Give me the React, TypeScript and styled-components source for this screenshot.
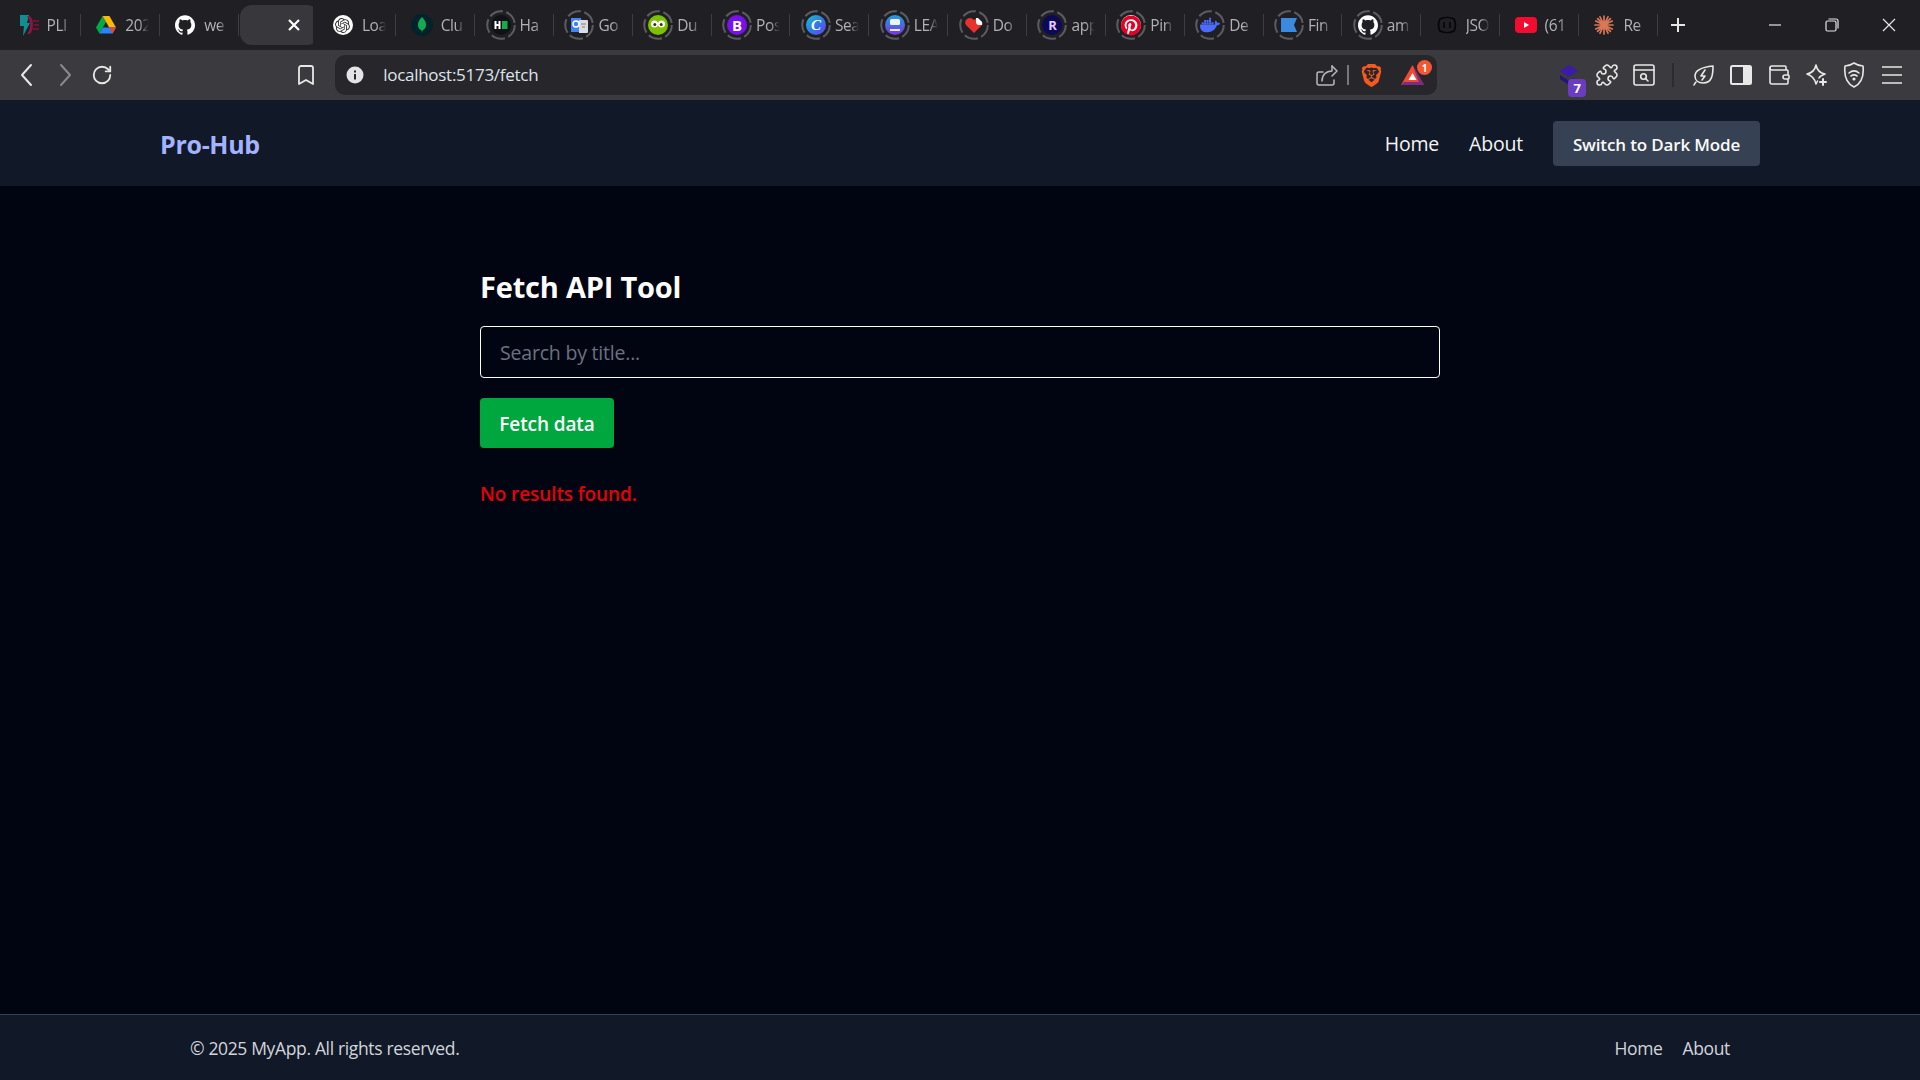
import React from 'react';
import styled, { createGlobalStyle } from 'styled-components';
import { SiGithub, SiOpenai, SiPinterest, SiDocker, SiBrave } from 'react-icons/si';
import { Bookmark, Puzzle, RotateCw, Wallet } from 'lucide-react';

const GlobalStyle = createGlobalStyle`
  html, body {
    margin: 0;
    padding: 0;
    background: #010511;
  }
  * {
    box-sizing: border-box;
  }
`;

const FONT = `'Open Sans', 'Noto Sans', 'Liberation Sans', sans-serif`;

const Page = styled.div`
  width: 1920px;
  height: 1080px;
  display: flex;
  flex-direction: column;
  overflow: hidden;
  font-family: ${FONT};
  background: #010511;
`;

/* browser chrome */
const TabStrip = styled.div`
  height: 50px;
  display: flex;
  align-items: center;
  padding-left: 2px;
  background: #1f1f24;
  flex-shrink: 0;
`;

const Tab = styled.div`
  width: 78.85px;
  height: 40px;
  flex-shrink: 0;
  display: flex;
  align-items: center;
  padding-left: 13.5px;
  position: relative;

  &::after {
    content: '';
    position: absolute;
    right: 0;
    top: 9px;
    height: 22px;
    width: 1px;
    background: #3d3d42;
  }
`;

const ActiveTab = styled.div`
  width: 78.85px;
  height: 40px;
  flex-shrink: 0;
  display: flex;
  align-items: center;
  justify-content: flex-end;
  padding-right: 18px;
  margin-left: 1.5px;
  margin-right: -1.5px;
  background: linear-gradient(to right, #37373c 73px, transparent 73px);
  border-radius: 12px;
  color: #fff;
`;

const FaviconSlot = styled.div`
  width: 24px;
  height: 24px;
  flex-shrink: 0;
  position: relative;
  display: flex;
  align-items: center;
  justify-content: center;
`;

const Ring = styled.svg`
  position: absolute;
  inset: -3px;
  width: 30px;
  height: 30px;
`;

const TabTitle = styled.span`
  width: 24px;
  margin-left: 7px;
  overflow: hidden;
  white-space: nowrap;
  font-size: 15.5px;
  letter-spacing: -0.4px;
  color: #b2b2b5;
  mask-image: linear-gradient(to right, #000 60%, transparent 100%);
`;

const NewTab = styled.div`
  width: 41px;
  display: flex;
  justify-content: center;
  color: #e6e6e6;
`;

const WindowControls = styled.div`
  margin-left: auto;
  padding-right: 3px;
  display: flex;
  color: #e6e6e6;
`;

const WindowButton = styled.div`
  width: 57px;
  height: 40px;
  display: flex;
  align-items: center;
  justify-content: center;
`;

const Toolbar = styled.div`
  height: 50px;
  flex-shrink: 0;
  display: flex;
  align-items: center;
  padding: 0 9px 0 8px;
  background: #3a3a3f;
  color: #e8e8e8;
`;

const ToolButton = styled.div<{ $dim?: boolean }>`
  width: 37.8px;
  height: 40px;
  flex-shrink: 0;
  display: flex;
  align-items: center;
  justify-content: center;
  position: relative;
  color: ${(p) => (p.$dim ? '#8a8a8e' : '#e8e8e8')};
`;

const BookmarkButton = styled(ToolButton)`
  margin-left: 166px;
`;

const ExtensionButton = styled(ToolButton)`
  margin-right: -1.5px;
`;

const UrlBar = styled.div`
  width: 1102px;
  height: 40px;
  margin-left: 10px;
  display: flex;
  align-items: center;
  padding: 0 0 0 11px;
  background: #27272b;
  border-radius: 10px;
`;

const UrlText = styled.span`
  margin-left: 19px;
  margin-top: -2px;
  font-size: 17px;
  letter-spacing: -0.28px;
  color: #dfe3ea;
`;

const UrlActions = styled.div`
  margin-left: auto;
  display: flex;
  align-items: center;
`;

const UrlDivider = styled.div`
  width: 2px;
  height: 20px;
  margin: 0 8px 0 3px;
  background: #77777b;
`;

const UrlAction = styled.div<{ $w: number }>`
  width: ${(p) => p.$w}px;
  height: 40px;
  display: flex;
  align-items: center;
  justify-content: center;
  position: relative;
`;

const Badge = styled.span<{ $color: string; $square?: boolean }>`
  position: absolute;
  min-width: 15px;
  height: 15px;
  display: flex;
  align-items: center;
  justify-content: center;
  font-size: 10px;
  font-weight: 700;
  color: #fff;
  background: ${(p) => p.$color};
  border-radius: ${(p) => (p.$square ? '4px' : '50%')};
`;

const NotifBadge = styled(Badge)`
  top: 5px;
  right: 5px;
`;

const ExtBadge = styled(Badge)`
  top: 24px;
  right: 3px;
  min-width: 18px;
  height: 18px;
  font-size: 13px;
`;

const ToolSpacer = styled.div`
  margin-left: auto;
`;

const ToolDivider = styled.div`
  width: 2px;
  height: 24px;
  margin: 0 10px 0 9px;
  background: #2c2c30;
  flex-shrink: 0;
`;

/* app */
const Header = styled.header`
  height: 86px;
  flex-shrink: 0;
  display: flex;
  align-items: center;
  justify-content: space-between;
  padding: 0 160px;
  background: #111827;
`;

const Logo = styled.div`
  margin-top: 2px;
  font-size: 25px;
  font-weight: 700;
  letter-spacing: -0.3px;
  color: #a3b3ff;
`;

const Nav = styled.nav`
  display: flex;
  align-items: center;
`;

const NavLink = styled.a`
  margin-right: 30px;
  font-size: 19.5px;
  letter-spacing: -0.2px;
  color: #f3f4f6;
`;

const ThemeButton = styled.button`
  width: 207px;
  height: 45px;
  border: 0;
  border-radius: 4px;
  padding: 2px 0 0;
  background: #364153;
  color: #f9fafb;
  font-family: ${FONT};
  font-size: 17px;
  font-weight: 600;
  letter-spacing: -0.15px;
`;

const Main = styled.main`
  flex: 1;
  width: 960px;
  margin: 0 auto;
  padding-top: 83px;
  display: flex;
  flex-direction: column;
  align-items: flex-start;
`;

const Title = styled.h1`
  margin: 0 0 21px;
  font-size: 29px;
  line-height: 36px;
  font-weight: 700;
  letter-spacing: -0.2px;
  color: #fff;
`;

const SearchInput = styled.input`
  width: 100%;
  height: 52px;
  padding: 0 19px;
  background: transparent;
  border: 1px solid #fff;
  border-radius: 4px;
  outline: none;
  color: #fff;
  font-family: ${FONT};
  font-size: 19.5px;
  letter-spacing: -0.2px;

  &::placeholder {
    color: #6a7282;
    opacity: 1;
  }
`;

const FetchButton = styled.button`
  width: 134px;
  height: 50px;
  margin-top: 20px;
  padding: 2px 0 0;
  border: 0;
  border-radius: 4px;
  background: #00a63e;
  color: #fff;
  font-family: ${FONT};
  font-size: 19px;
  font-weight: 600;
  letter-spacing: -0.1px;
`;

const ErrorText = styled.p`
  margin: 32px 0 0;
  font-size: 19px;
  line-height: 28px;
  font-weight: 600;
  letter-spacing: -0.1px;
  color: #e7000b;
`;

const Footer = styled.footer`
  height: 66px;
  flex-shrink: 0;
  display: flex;
  align-items: center;
  justify-content: space-between;
  padding: 0 190px;
  background: #111827;
  border-top: 1px solid #364153;
  color: #d1d5dc;
  font-size: 17.5px;
  letter-spacing: -0.35px;
`;

const FooterNav = styled.div`
  display: flex;
  gap: 20px;
`;

/* favicons */
const StyledCircle = styled.span<{
  $bg: string;
  $color?: string;
  $italic?: boolean;
  $small?: boolean;
}>`
  width: 20px;
  height: 20px;
  display: flex;
  align-items: center;
  justify-content: center;
  border-radius: 50%;
  background: ${(p) => p.$bg};
  color: ${(p) => p.$color || '#000'};
  font-family: ${(p) => (p.$italic ? "'Liberation Serif', serif" : FONT)};
  font-style: ${(p) => (p.$italic ? 'italic' : 'normal')};
  font-size: ${(p) => (p.$small ? '13px' : '15px')};
  font-weight: 700;
`;

const favicons: Record<string, React.ReactNode> = {
  pli: (
    <svg width="24" height="24" viewBox="0 0 24 24">
      <path d="M4 2h9l-2 8h3l-7 13 1-10H4z" fill="#0f8f92" />
      <path d="M11 3h3c4 3 4 14 0 18h-3c4-4 4-14 0-18z" fill="#8d1440" />
      <path d="M17 7h6v2h-6zM18 11h5v2h-5zM17 15h6v2h-6z" fill="#6d1233" />
    </svg>
  ),
  drive: (
    <svg width="22" height="20" viewBox="0 0 22 20">
      <path d="M7.6 1 1 12.6l3.400 6L11 7z" fill="#00ac47" />
      <path d="M7.6 1h6.800L21 12.6h-6.800z" fill="#ffba00" />
      <path d="M4.400 18.6 7.800 12.6H21l-3.400 6z" fill="#2684fc" />
      <path d="M14.200 12.6H21l-3.400 6z" fill="#ea4335" />
    </svg>
  ),
  github: <SiGithub size={20} color="#fff" />,
  openai: (
    <StyledCircle $bg="#fff">
      <SiOpenai size={15} color="#333" />
    </StyledCircle>
  ),
  mongo: (
    <svg width="22" height="22" viewBox="0 0 22 22">
      <circle cx="11" cy="11" r="11" fill="#04222c" />
      <path d="M11 3c3 3 4.500 6 4 9-.4 2.400-2.400 3.800-3.600 4.500L11 19.500l-.4-3C9.200 15.800 7.400 14.400 7 12c-.5-3 1-6 4-9z" fill="#13aa52" />
    </svg>
  ),
  hacker: (
    <svg width="20" height="20" viewBox="0 0 20 20">
      <circle cx="10" cy="10" r="10" fill="#101216" />
      <path d="M3.500 6h2v3h2V6h2v8h-2v-3h-2v3h-2z" fill="#fff" />
      <rect x="11" y="6" width="5.500" height="8" fill="#1ba94c" />
    </svg>
  ),
  google: (
    <svg width="20" height="20" viewBox="0 0 20 20">
      <path d="M2 3h10l2 14H2z" fill="#4285f4" />
      <path d="M10 5h8a1 1 0 0 1 1 1v11a1 1 0 0 1-1 1h-8z" fill="#dadce0" />
      <circle cx="7" cy="9" r="3" fill="none" stroke="#fff" strokeWidth="1.400" />
      <path d="M12 9h5M13 12h3" stroke="#7d8085" strokeWidth="1.200" />
    </svg>
  ),
  duo: (
    <svg width="20" height="20" viewBox="0 0 20 20">
      <circle cx="10" cy="10" r="10" fill="#79c300" />
      <circle cx="6.500" cy="9" r="3.500" fill="#fff" />
      <circle cx="13.500" cy="9" r="3.500" fill="#fff" />
      <circle cx="6.800" cy="9.500" r="1.500" fill="#2c3a10" />
      <circle cx="13.200" cy="9.500" r="1.500" fill="#2c3a10" />
      <path d="M8.500 12.500h3L10 15z" fill="#f49000" />
    </svg>
  ),
  bootstrap: <StyledCircle $bg="#7a10ee" $color="#fff">B</StyledCircle>,
  canva: (
    <StyledCircle $bg="linear-gradient(135deg, #18c4cf 0%, #2f7be5 50%, #6a3de8 100%)" $color="#fff" $italic>
      C
    </StyledCircle>
  ),
  lea: (
    <svg width="20" height="20" viewBox="0 0 20 20">
      <defs>
        <linearGradient id="leaGrad" x1="0" y1="0" x2="0" y2="1">
          <stop offset="0" stopColor="#1ea0dd" />
          <stop offset="1" stopColor="#7a35e0" />
        </linearGradient>
      </defs>
      <circle cx="10" cy="10" r="10" fill="url(#leaGrad)" />
      <rect x="5" y="4" width="10" height="6" rx="1.500" fill="#e8f4ff" />
      <rect x="5" y="14" width="10" height="2" fill="#e8e6ff" />
    </svg>
  ),
  heart: (
    <svg width="20" height="20" viewBox="0 0 20 20">
      <path d="M10 18 2 10C0 7 2 3 6 3c2 0 3 1 4 2l3-2 5 4c1 1 1 2 0 3z" fill="#e9322e" />
      <path d="M12 3h2l4 4v3h-3a3 3 0 0 1-3-3z" fill="#fff" />
    </svg>
  ),
  app: (
    <StyledCircle $bg="#0b0a57" $color="#f0c6ff" $small>
      R
    </StyledCircle>
  ),
  pinterest: (
    <StyledCircle $bg="#fff">
      <SiPinterest size={21} color="#e60023" />
    </StyledCircle>
  ),
  deepseek: <SiDocker size={20} color="#4d6bfe" />,
  fin: (
    <svg width="20" height="20" viewBox="0 0 20 20">
      <path d="M2 3h16l-3 7 3 7H2z" fill="#3c8adf" />
    </svg>
  ),
  json: (
    <svg width="22" height="20" viewBox="0 0 22 20" fill="none" stroke="#050505" strokeWidth="1.600">
      <path d="M4 4c4-2 10-2 14 0 2 4 2 8 0 12-4 2-10 2-14 0-2-4-2-8 0-12z" />
      <path d="M8 7v6M14 7v6" />
    </svg>
  ),
  youtube: (
    <svg width="22" height="16" viewBox="0 0 22 16">
      <rect width="22" height="16" rx="4" fill="#f20c30" />
      <path d="M9 5l5 3-5 3z" fill="#fff" />
    </svg>
  ),
  claude: (
    <svg width="22" height="22" viewBox="0 0 22 22" stroke="#d97757" strokeWidth="1.700" strokeLinecap="round">
      <path d="M11 2v18M2 11h18M4.600 4.600l12.800 12.800M17.400 4.600 4.600 17.400M7 2.800l8 16.400M15 2.800 7 19.200M2.800 7l16.400 8M2.800 15l16.400-8" />
    </svg>
  ),
};

const tabs: { icon: string; title: string; ring?: boolean; active?: boolean }[] = [
  { icon: 'pli', title: 'PLI' },
  { icon: 'drive', title: '202' },
  { icon: 'github', title: 'we' },
  { icon: '', title: '', active: true },
  { icon: 'openai', title: 'Loa' },
  { icon: 'mongo', title: 'Clu' },
  { icon: 'hacker', title: 'Ha', ring: true },
  { icon: 'google', title: 'Go', ring: true },
  { icon: 'duo', title: 'Du', ring: true },
  { icon: 'bootstrap', title: 'Pos', ring: true },
  { icon: 'canva', title: 'Sea', ring: true },
  { icon: 'lea', title: 'LEA', ring: true },
  { icon: 'heart', title: 'Do', ring: true },
  { icon: 'app', title: 'app', ring: true },
  { icon: 'pinterest', title: 'Pin', ring: true },
  { icon: 'deepseek', title: 'De', ring: true },
  { icon: 'fin', title: 'Fin', ring: true },
  { icon: 'github', title: 'am', ring: true },
  { icon: 'json', title: 'JSO' },
  { icon: 'youtube', title: '(61' },
  { icon: 'claude', title: 'Re' },
];

const strokeProps = {
  fill: 'none',
  stroke: 'currentColor',
  strokeWidth: 1.8,
  strokeLinecap: 'round' as const,
  strokeLinejoin: 'round' as const,
};

const App: React.FC = () => {
  return (
    <Page>
      <GlobalStyle />
      <TabStrip>
        {tabs.map((tab, i) =>
          tab.active ? (
            <ActiveTab key={i}>
              <svg width="14" height="14" viewBox="0 0 14 14" stroke="currentColor" strokeWidth="2.200">
                <path d="M2 2l10 10M12 2 2 12" />
              </svg>
            </ActiveTab>
          ) : (
            <Tab key={i}>
              <FaviconSlot>
                {favicons[tab.icon]}
                {tab.ring && (
                  <Ring viewBox="0 0 30 30">
                    <circle cx="15" cy="15" r="13.800" fill="none" stroke="#5b5b60" strokeWidth="2" strokeDasharray="14 3.500" />
                  </Ring>
                )}
              </FaviconSlot>
              <TabTitle>{tab.title}</TabTitle>
            </Tab>
          ),
        )}
        <NewTab>
          <svg width="16" height="16" viewBox="0 0 16 16" stroke="currentColor" strokeWidth="2">
            <path d="M8 1v14M1 8h14" />
          </svg>
        </NewTab>
        <WindowControls>
          <WindowButton>
            <svg width="14" height="14" viewBox="0 0 14 14" stroke="currentColor" strokeWidth="1.200">
              <path d="M1 7h12" />
            </svg>
          </WindowButton>
          <WindowButton>
            <svg width="14" height="14" viewBox="0 0 14 14" fill="none" stroke="currentColor" strokeWidth="1.200">
              <rect x="1" y="3" width="10" height="10" rx="1.500" />
              <path d="M3.500 1H11a2 2 0 0 1 2 2v7.500" />
            </svg>
          </WindowButton>
          <WindowButton>
            <svg width="16" height="16" viewBox="0 0 16 16" stroke="currentColor" strokeWidth="1.200">
              <path d="M2 2l12 12M14 2 2 14" />
            </svg>
          </WindowButton>
        </WindowControls>
      </TabStrip>

      <Toolbar>
        <ToolButton>
          <svg width="14" height="24" viewBox="0 0 14 24" {...strokeProps} strokeWidth={2}>
            <path d="M11 2 2 12l9 10" />
          </svg>
        </ToolButton>
        <ToolButton $dim>
          <svg width="14" height="24" viewBox="0 0 14 24" {...strokeProps} strokeWidth={2}>
            <path d="m3 2 9 10-9 10" />
          </svg>
        </ToolButton>
        <ToolButton>
          <RotateCw size={22} strokeWidth={2} />
        </ToolButton>
        <BookmarkButton>
          <Bookmark size={24} strokeWidth={1.8} />
        </BookmarkButton>
        <UrlBar>
          <svg width="18" height="18" viewBox="0 0 18 18">
            <circle cx="9" cy="9" r="8.500" fill="#e4e4e6" />
            <rect x="8" y="8" width="2" height="5.500" fill="#27272b" />
            <rect x="8" y="4.500" width="2" height="2" fill="#27272b" />
          </svg>
          <UrlText>localhost:5173/fetch</UrlText>
          <UrlActions>
            <UrlAction $w={34}>
              <svg width="22" height="24" viewBox="0 0 22 24" {...strokeProps} stroke="#b9b9bc" strokeWidth={1.500}>
                <path d="M7 9H3a2 2 0 0 0-2 2v9a2 2 0 0 0 2 2h13a2 2 0 0 0 2-2v-3" />
                <path d="M6 18c0-6 4-10 10-10V3" />
                <path d="m16 3 5 5-5 5" />
              </svg>
            </UrlAction>
            <UrlDivider />
            <UrlAction $w={30.6}>
              <SiBrave size={23} color="#f5591f" />
            </UrlAction>
            <UrlAction $w={50}>
              <svg width="23" height="20" viewBox="0 0 23 20">
                <path d="M11.500 0 23 20H0z" fill="#f04a30" />
                <path d="M11.500 0 23 20h-4z" fill="#7b2a86" />
                <path d="M0 20h23l-3-3H3z" fill="#7b2a86" />
                <path d="m11.500 8 4 7h-8z" fill="#fff" />
              </svg>
              <NotifBadge $color="#f4572f">1</NotifBadge>
            </UrlAction>
          </UrlActions>
        </UrlBar>

        <ToolSpacer />
        <ExtensionButton>
          <svg width="22" height="22" viewBox="0 0 22 22">
            <path d="M10 1 19 7l-9 6-9-6z" fill="#3a1ca8" />
            <path d="M1 11l9 6 5-3v5l-5 2-9-6z" fill="#27137a" />
          </svg>
          <ExtBadge $color="#6a3cc0" $square>7</ExtBadge>
        </ExtensionButton>
        <ToolButton>
          <Puzzle size={24} strokeWidth={1.600} />
        </ToolButton>
        <ToolButton>
          <svg width="22" height="22" viewBox="0 0 22 22" {...strokeProps} strokeWidth={1.600}>
            <rect x="1" y="1" width="20" height="20" rx="2" />
            <path d="M1 6h20" />
            <circle cx="10.500" cy="12.500" r="2.800" />
            <path d="m12.700 14.700 2.300 2.300" />
          </svg>
        </ToolButton>
        <ToolDivider />
        <ToolButton>
          <svg width="24" height="24" viewBox="0 0 24 24" {...strokeProps} strokeWidth={1.600}>
            <path d="M22 3c0 9-1 17-10 17-5 0-8-3-8-7 0-6 8-9 18-10z" />
            <path d="M3 22c.5-1 1-2 2-3" />
            <path d="M14 7l-4 6h4l-3 4" />
          </svg>
        </ToolButton>
        <ToolButton>
          <svg width="22" height="22" viewBox="0 0 22 22">
            <rect x="1" y="2" width="20" height="18" rx="1.500" fill="none" stroke="currentColor" strokeWidth="2" />
            <rect x="13" y="2" width="8" height="18" fill="currentColor" />
          </svg>
        </ToolButton>
        <ToolButton>
          <Wallet size={24} strokeWidth={1.600} />
        </ToolButton>
        <ToolButton>
          <svg width="24" height="24" viewBox="0 0 24 24" {...strokeProps} strokeWidth={1.600}>
            <path d="M11 2c1 5 3 8 9 9-3 1-5 2-6 4M11 21c-1-5-3-8-9-10 5-1 8-4 9-9M11 21c.5-1 1-2 1.500-3" />
            <path d="M18 16v6M15 19h6" strokeWidth={2} />
          </svg>
        </ToolButton>
        <ToolButton>
          <svg width="22" height="26" viewBox="0 0 22 26" {...strokeProps} strokeWidth={1.600}>
            <path d="M11 1c3 2 6 3 9 3 1 9-1 17-9 21C3 21 1 13 2 4c3 0 6-1 9-3z" />
            <path d="M6 11c3-2.500 7-2.500 10 0M8 14c2-1.500 4-1.500 6 0" />
            <circle cx="11" cy="17" r=".8" />
          </svg>
        </ToolButton>
        <ToolButton>
          <svg width="22" height="20" viewBox="0 0 22 20" stroke="currentColor" strokeWidth="1.600">
            <path d="M1 2h20M1 10h20M1 18h20" />
          </svg>
        </ToolButton>
      </Toolbar>

      <Header>
        <Logo>Pro-Hub</Logo>
        <Nav>
          <NavLink>Home</NavLink>
          <NavLink>About</NavLink>
          <ThemeButton>Switch to Dark Mode</ThemeButton>
        </Nav>
      </Header>

      <Main>
        <Title>Fetch API Tool</Title>
        <SearchInput placeholder="Search by title..." />
        <FetchButton>Fetch data</FetchButton>
        <ErrorText>No results found.</ErrorText>
      </Main>

      <Footer>
        <span>© 2025 MyApp. All rights reserved.</span>
        <FooterNav>
          <span>Home</span>
          <span>About</span>
        </FooterNav>
      </Footer>
    </Page>
  );
};

export default App;
